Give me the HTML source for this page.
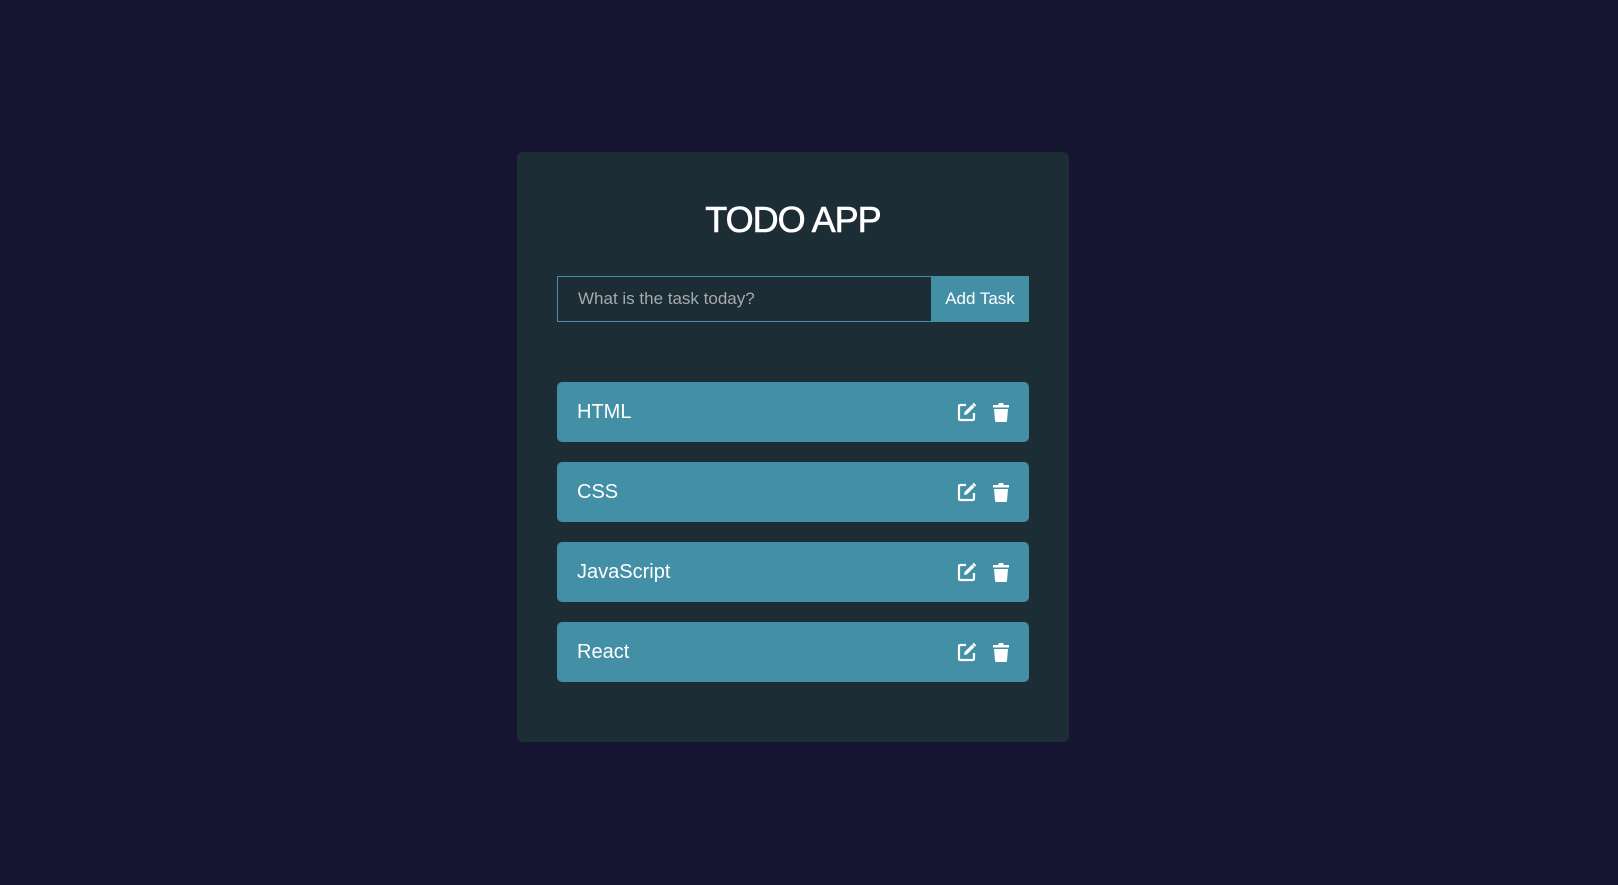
<!DOCTYPE html>
<html><head><meta charset="utf-8"><style>
*{margin:0;padding:0;box-sizing:border-box}
body{width:1618px;height:885px;background:#151531;font-family:"Liberation Sans",sans-serif;position:relative;overflow:hidden}
.card{position:absolute;left:517px;top:152px;width:552px;height:590px;background:#1d2d36;border-radius:6px}
h1{position:absolute;left:517px;width:552px;top:199px;text-align:center;color:#fff;font-size:36px;font-weight:normal;letter-spacing:-1px;-webkit-text-stroke:0.6px #fff}
.inp{position:absolute;left:557px;top:276px;width:375px;height:46px;border:1px solid #438fa6;color:#a5aaad;font-size:17px;line-height:44px;padding-left:20px}
.btn{position:absolute;left:931px;top:276px;width:98px;height:46px;background:#438fa6;color:#fff;font-size:17px;line-height:46px;text-align:center}
.item{position:absolute;left:557px;width:472px;height:60px;background:#438fa6;border-radius:5px;color:#fff;font-size:20px;line-height:60px;padding-left:20px}
.item svg{position:absolute;top:20px}
</style></head><body>
<div class="card"></div>
<h1>TODO APP</h1>
<div class="inp">What is the task today?</div>
<div class="btn">Add Task</div>
<div class="item" style="top:382px">HTML<svg style="left:400px" width="20" height="20" viewBox="0 0 20 20"><path d="M9 3H3.5Q2 3 2 4.5V16.5Q2 18 3.5 18H15.5Q17 18 17 16.5V11" fill="none" stroke="#fff" stroke-width="2.2"/><path d="M7 13L7.6 10L15 2.6L17.4 5L10 12.4Z" fill="#fff"/><path d="M16 1.5L18.5 4" stroke="#fff" stroke-width="2"/></svg><svg style="left:435px" width="18" height="20" viewBox="0 0 18 20"><path d="M1 3H6L7 1H11L12 3H17V5.5H1Z M2 7H16L15 18.5Q15 20 13.5 20H4.5Q3 20 3 18.5Z" fill="#fff"/></svg></div>
<div class="item" style="top:462px">CSS<svg style="left:400px" width="20" height="20" viewBox="0 0 20 20"><path d="M9 3H3.5Q2 3 2 4.5V16.5Q2 18 3.5 18H15.5Q17 18 17 16.5V11" fill="none" stroke="#fff" stroke-width="2.2"/><path d="M7 13L7.6 10L15 2.6L17.4 5L10 12.4Z" fill="#fff"/><path d="M16 1.5L18.5 4" stroke="#fff" stroke-width="2"/></svg><svg style="left:435px" width="18" height="20" viewBox="0 0 18 20"><path d="M1 3H6L7 1H11L12 3H17V5.5H1Z M2 7H16L15 18.5Q15 20 13.5 20H4.5Q3 20 3 18.5Z" fill="#fff"/></svg></div>
<div class="item" style="top:542px">JavaScript<svg style="left:400px" width="20" height="20" viewBox="0 0 20 20"><path d="M9 3H3.5Q2 3 2 4.5V16.5Q2 18 3.5 18H15.5Q17 18 17 16.5V11" fill="none" stroke="#fff" stroke-width="2.2"/><path d="M7 13L7.6 10L15 2.6L17.4 5L10 12.4Z" fill="#fff"/><path d="M16 1.5L18.5 4" stroke="#fff" stroke-width="2"/></svg><svg style="left:435px" width="18" height="20" viewBox="0 0 18 20"><path d="M1 3H6L7 1H11L12 3H17V5.5H1Z M2 7H16L15 18.5Q15 20 13.5 20H4.5Q3 20 3 18.5Z" fill="#fff"/></svg></div>
<div class="item" style="top:622px">React<svg style="left:400px" width="20" height="20" viewBox="0 0 20 20"><path d="M9 3H3.5Q2 3 2 4.5V16.5Q2 18 3.5 18H15.5Q17 18 17 16.5V11" fill="none" stroke="#fff" stroke-width="2.2"/><path d="M7 13L7.6 10L15 2.6L17.4 5L10 12.4Z" fill="#fff"/><path d="M16 1.5L18.5 4" stroke="#fff" stroke-width="2"/></svg><svg style="left:435px" width="18" height="20" viewBox="0 0 18 20"><path d="M1 3H6L7 1H11L12 3H17V5.5H1Z M2 7H16L15 18.5Q15 20 13.5 20H4.5Q3 20 3 18.5Z" fill="#fff"/></svg></div>
</body></html>
